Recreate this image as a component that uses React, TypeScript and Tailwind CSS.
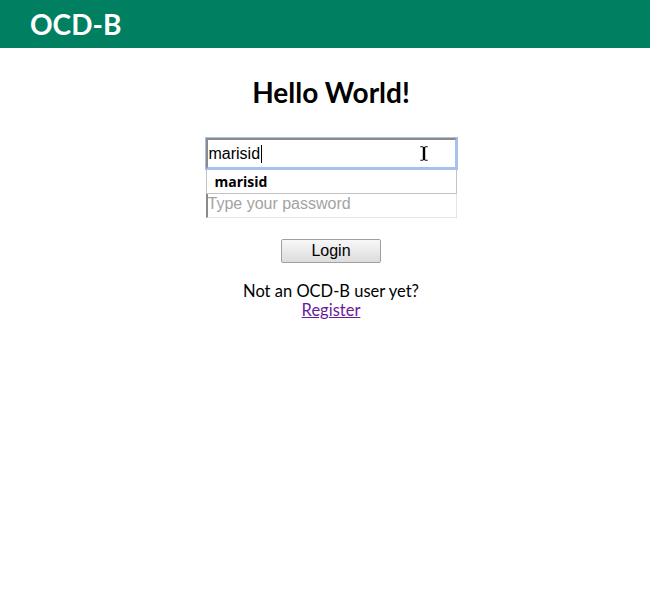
export default function App() {
  const heading = { fontFamily: 'Lato, "Open Sans", sans-serif' };
  const arial = { fontFamily: '"Liberation Sans", Arial, sans-serif' };

  return (
    <div className="min-h-[590px] bg-white text-black" style={heading}>
      <header className="h-12 bg-[#008060] px-[30px] flex items-center">
        <span className="text-[28px] font-bold text-white leading-none">OCD-B</span>
      </header>

      <main className="flex flex-col items-center pl-3">
        <h1 className="mt-[29px] text-[28px] font-bold leading-[30px]">Hello World!</h1>

        <form className="mt-[31px] flex flex-col w-[251px]" onSubmit={(e) => e.preventDefault()}>
          <div className="relative">
            <div
              className="h-[31px] border-2 border-t-[#8a8a8a] border-l-[#8a8a8a] border-r-[#a8c0ee] border-b-[#a8c0ee] outline outline-1 outline-[#a8c0ee] flex items-center px-[1px] text-[16px]"
              style={arial}
            >
              marisid<span className="inline-block w-px h-[18px] bg-black ml-px" />
            </div>
            <svg className="absolute left-[213px] top-[7px]" width="10" height="17" viewBox="0 0 10 17">
              <path
                d="M1 1h3l1 1 1-1h3v1.5H6.5v12H9V16H6L5 15 4 16H1v-1.5h2.5v-12H1z"
                fill="#000"
                stroke="#fff"
                strokeWidth="0.6"
              />
            </svg>
          </div>
          <div
            className="h-[25px] border border-[#c3c3c3] border-t-0 flex items-center pl-2 text-[14px] font-bold"
            style={{ fontFamily: '"Open Sans", sans-serif' }}
          >
            marisid
          </div>
          <div
            className="h-[24px] border-l-2 border-l-[#8a8a8a] border-b border-r border-[#e3e3e3] flex items-start pt-px text-[16px] leading-[18px] text-[#a3a3a3]"
            style={arial}
          >
            Type your password
          </div>

          <div className="flex justify-center mt-[21px]">
            <button
              type="submit"
              className="w-[100px] h-[24px] border border-[#a0a0a0] rounded-[2px] bg-gradient-to-b from-[#f8f8f8] to-[#dcdcdc] text-[16px] leading-none"
              style={arial}
            >
              Login
            </button>
          </div>
        </form>

        <p className="mt-[19px] text-[16.5px] leading-[19px] text-center">
          Not an OCD-B user yet?
          <br />
          <a href="#" className="text-[#6a1b9a] underline">Register</a>
        </p>
      </main>
    </div>
  );
}
